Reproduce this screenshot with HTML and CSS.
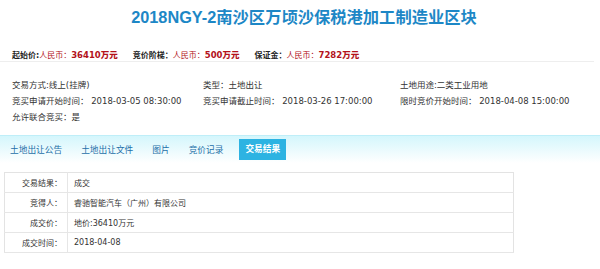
FILE: index.html
```html
<!DOCTYPE html>
<html lang="zh-CN">
<head>
    <meta charset="UTF-8">
    <title>2018NGY-2南沙区万顷沙保税港加工制造业区块</title>
    <link rel="stylesheet" href="styles.css">
</head>
<body>
    <div class="page">
        <h1 class="title">2018NGY-2南沙区万顷沙保税港加工制造业区块</h1>

        <div class="prices">
            <span class="price">起始价:<em>人民币：</em><b>36410万元</b></span>
            <span class="price">竞价阶梯：<em>人民币：</em><b>500万元</b></span>
            <span class="price">保证金：<em>人民币：</em><b>7282万元</b></span>
        </div>

        <div class="info">
            <div>交易方式:线上(挂牌)</div>
            <div>类型：土地出让</div>
            <div>土地用途:二类工业用地</div>
            <div>竞买申请开始时间：&nbsp;2018-03-05 08:30:00</div>
            <div>竞买申请截止时间：&nbsp;2018-03-26 17:00:00</div>
            <div>限时竞价开始时间：&nbsp;2018-04-08 15:00:00</div>
            <div>允许联合竞买：是</div>
        </div>

        <div class="tabs">
            <a class="tab">土地出让公告</a>
            <a class="tab">土地出让文件</a>
            <a class="tab">图片</a>
            <a class="tab">竞价记录</a>
            <a class="tab active">交易结果</a>
        </div>

        <table class="result">
            <tr>
                <th>交易结果：</th>
                <td>成交</td>
            </tr>
            <tr>
                <th>竞得人：</th>
                <td>睿驰智能汽车（广州）有限公司</td>
            </tr>
            <tr>
                <th>成交价：</th>
                <td>地价:36410万元</td>
            </tr>
            <tr>
                <th>成交时间：</th>
                <td>2018-04-08</td>
            </tr>
        </table>
    </div>
</body>
</html>
```

FILE: styles.css
```css
body {
    margin: 0;
    font-family: "DejaVu Sans", "Noto Sans CJK SC", sans-serif;
    font-size: 8.5px;
    color: #333;
    background-color: #fff;
}
.page {
    width: 600px;
}
.title {
    margin: 0;
    padding-top: 6px;
    height: 30px;
    text-align: center;
    padding-left: 8px;
    font-family: "Liberation Sans", "Noto Sans CJK SC", sans-serif;
    font-size: 16.3px;
    line-height: 22px;
    font-weight: bold;
    color: #1d87c6;
}
.prices {
    display: flex;
    align-items: center;
    gap: 15px;
    height: 14px;
    margin: 9px 6px 0 0;
    padding: 2px 0 0 12px;
    border-bottom: 1px solid #eee;
    font-size: 8px;
    font-weight: bold;
    color: #222;
}
.prices em {
    font-style: normal;
    font-weight: normal;
    color: #b3121b;
}
.prices b {
    font-size: 8.5px;
    color: #b3121b;
}
.info {
    display: grid;
    grid-template-columns: 191px 197px auto;
    grid-auto-rows: 16px;
    align-items: center;
    height: 59px;
    padding: 14px 0 0 12px;
}
.tabs {
    display: flex;
    align-items: center;
    height: 27px;
    padding-left: 10px;
    border-top: 1px solid #bfeef8;
    background: linear-gradient(#d4f6fc, #ffffff);
    margin-bottom: 9px;
    font-size: 8.7px;
}
.tab {
    margin-right: 19px;
    color: #1d6fa8;
}
.tab.active {
    margin-left: -3px;
    padding: 0 6px;
    height: 21px;
    line-height: 21px;
    background-color: #2db3e2;
    color: #fff;
    font-weight: bold;
}
.result {
    margin-left: 4px;
    width: 510px;
    border-collapse: collapse;
    border: 1px solid #e3e3e3;
    font-size: 8px;
}
.result th, .result td {
    height: 19px;
    padding: 0;
    border-bottom: 1px solid #e6e6e6;
}
.result th {
    width: 57px;
    padding-right: 5px;
    text-align: right;
    font-weight: normal;
    border-right: 1px solid #e6e6e6;
}
.result td {
    padding-left: 6px;
}
```
